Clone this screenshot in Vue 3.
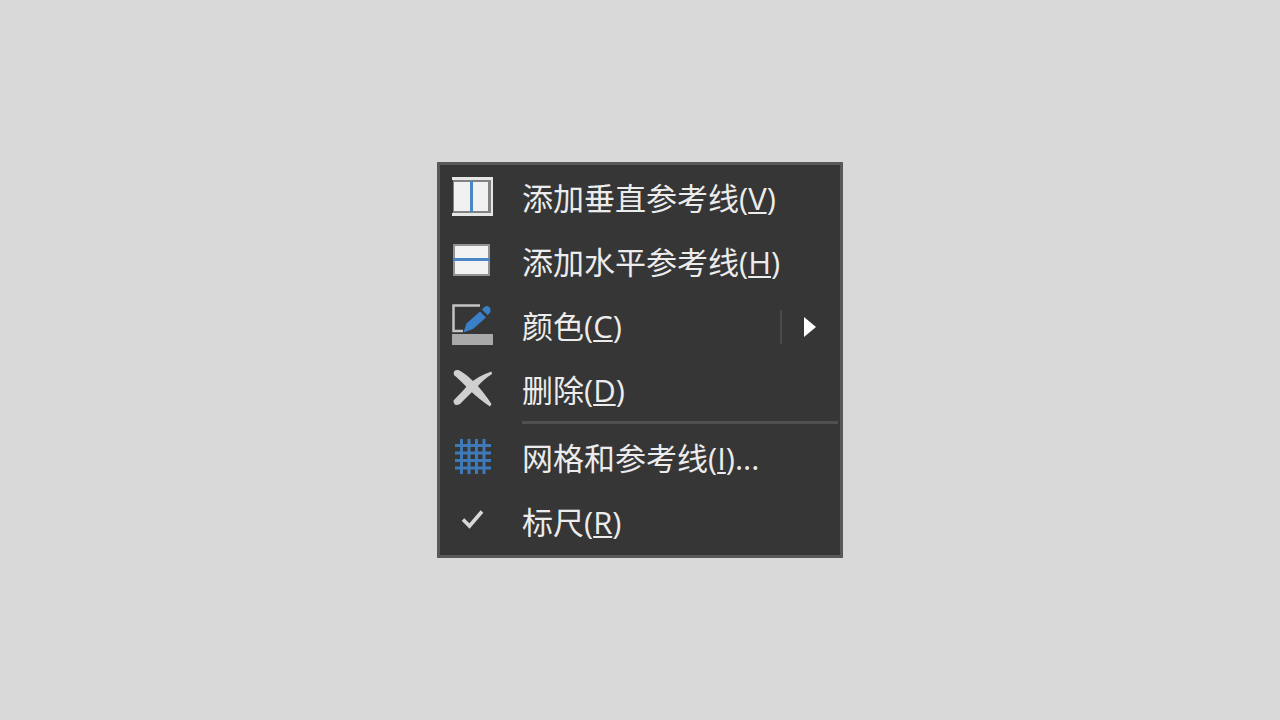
<script setup>
const groups = [
  [
    { id: 'vertical', label: '添加垂直参考线', key: 'V' },
    { id: 'horizontal', label: '添加水平参考线', key: 'H' },
    { id: 'color', label: '颜色', key: 'C', submenu: true },
    { id: 'delete', label: '删除', key: 'D' },
  ],
  [
    { id: 'grid', label: '网格和参考线', key: 'I', suffix: '...' },
    { id: 'ruler', label: '标尺', key: 'R', checked: true },
  ],
]
</script>

<template>
  <main class="page">
    <div class="menu" role="menu">
      <template v-for="(group, index) in groups" :key="index">
        <hr v-if="index > 0" class="separator" />
        <button
          v-for="item in group"
          :key="item.id"
          type="button"
          class="item"
          :role="item.checked ? 'menuitemcheckbox' : 'menuitem'"
          :aria-checked="item.checked"
          :aria-haspopup="item.submenu ? 'menu' : undefined"
        >
          <svg class="icon" viewBox="0 0 48 48" aria-hidden="true">
            <g v-if="item.id === 'vertical'">
              <path d="M3 2H44V41H3V38H41V5H3Z" fill="#e6e6e6" />
              <path d="M4 5H42V38H4Z" fill="#828282" />
              <path d="M5 7H39V36H5Z" fill="#f1f1f1" />
              <path d="M21 6H24V37H21Z" fill="#4a86c5" />
            </g>
            <g v-else-if="item.id === 'horizontal'">
              <path d="M4 5H41V37H4Z" fill="#929292" />
              <path d="M6 7H39V35H6Z" fill="#f3f3f3" />
              <path d="M4 19H41V22H4Z" fill="#4a86c5" />
            </g>
            <g v-else-if="item.id === 'color'">
              <path d="M31 2.5H4.5V28H14" fill="none" stroke="#c4c4c4" stroke-width="2.5" />
              <path d="M3 31H44V42H3Z" fill="#a9a9a9" />
              <path d="M14.5 29.5L17.5 20.5L31 8.5L37 14.5L24 26Z" fill="#3a80c8" />
              <path d="M33 6.5L36 3.6Q38.3 2.2 40.4 4.3T41.5 9L38.7 12.2Z" fill="#3a80c8" />
            </g>
            <g v-else-if="item.id === 'delete'" fill="#d0d0d0">
              <path d="M5 8Q3.500 2.500 9.500 3Q16 6 25.500 15.500Q34 24 42.500 37L41 39.500Q31 33 20.500 23Q12 14 5 8Z" />
              <path d="M4.500 33.500Q13 25 19.500 17.500Q29 9 42.500 4.500L43 7Q35 12 27.500 20.500Q19 29 11 37Q4.500 40 4.500 33.500Z" />
            </g>
            <path
              v-else-if="item.id === 'grid'"
              d="M12.5 4V39M20 4V39M27.5 4V39M35 4V39M6 10.5H42M6 18H42M6 25.5H42M6 33H42"
              fill="none"
              stroke="#3f7ab8"
              stroke-width="3"
            />
            <path
              v-else
              d="M14 20.5L20.5 27L33 12.5"
              fill="none"
              stroke="#d8d8d8"
              stroke-width="3.6"
            />
          </svg>
          <span class="label">{{ item.label }}(<u>{{ item.key }}</u>){{ item.suffix }}</span>
          <span v-if="item.submenu" class="submenu">
            <svg class="arrow" viewBox="0 0 12 20" aria-hidden="true">
              <path d="M0 0L12 10L0 20Z" fill="#fff" />
            </svg>
          </span>
        </button>
      </template>
    </div>
  </main>
</template>

<style>
body {
  margin: 0;
  background: #d9d9d9;
}
</style>

<style scoped>
.page {
  display: flex;
  align-items: center;
  justify-content: center;
  min-height: 100vh;
}

.menu {
  box-sizing: border-box;
  display: flex;
  flex-direction: column;
  min-width: 406px;
  padding-top: 2px;
  border: 3px solid #595959;
  background: #363636;
}

.item {
  display: flex;
  align-items: center;
  height: 64px;
  margin: 0;
  padding: 0 0 0 9px;
  border: 0;
  background: transparent;
  color: #ececec;
  font-family: "Open Sans", "Noto Sans CJK SC", sans-serif;
  font-size: 31px;
  line-height: 44px;
  text-align: left;
  white-space: nowrap;
}

.icon {
  flex: none;
  width: 48px;
  height: 48px;
  margin-right: 25px;
}

.label {
  flex: 1;
  padding-bottom: 3px;
}

.label u {
  text-decoration-thickness: 2px;
  text-underline-offset: 2px;
}

.submenu {
  box-sizing: border-box;
  display: flex;
  align-items: center;
  width: 60px;
  height: 34px;
  padding-left: 22px;
  border-left: 2px solid #4a4a4a;
}

.arrow {
  width: 12px;
  height: 20px;
}

.separator {
  height: 3px;
  margin: -2px 2px 3px 82px;
  border: 0;
  background: #505050;
}
</style>
